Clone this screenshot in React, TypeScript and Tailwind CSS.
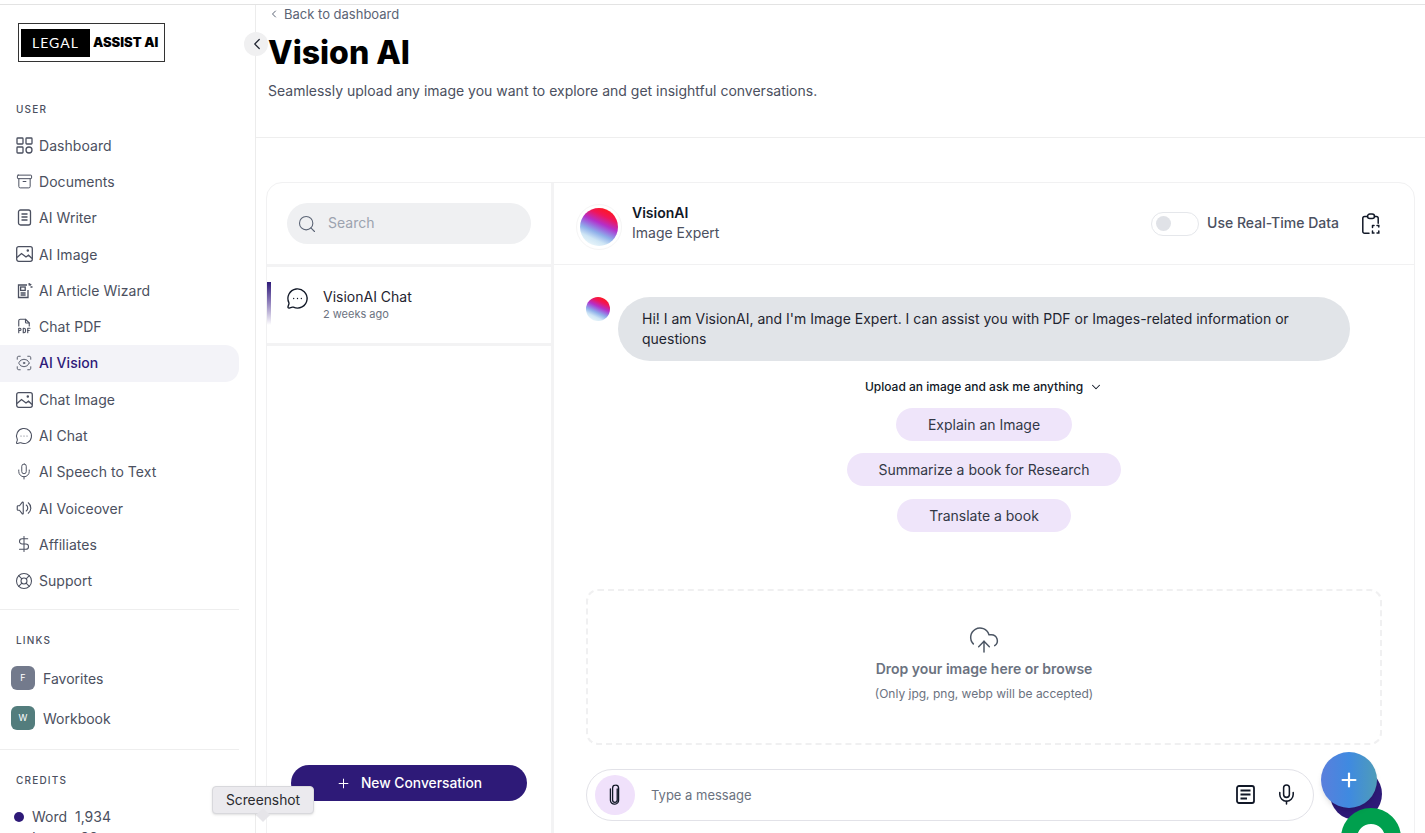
import type { ReactNode } from 'react';
import {
  Archive,
  ChevronDown,
  ChevronLeft,
  CloudUpload,
  DollarSign,
  LifeBuoy,
  MessageCircleMore,
  Mic,
  Plus,
  ScanEye,
  Search,
} from 'lucide-react';
import { TbFileTypePdf, TbVolume } from 'react-icons/tb';

const FONT = "font-['Inter','Noto_Sans',sans-serif]";
const AVATAR =
  'bg-[linear-gradient(205deg,#ff1818_10%,#f0155a_26%,#b52fc8_42%,#9a6fe0_52%,#8fb0ea_62%,#cfe6f5_76%,#eef8fb_92%)]';

function DashboardIcon() {
  return (
    <svg width="17" height="17" viewBox="0 0 17 17" fill="none" stroke="currentColor" strokeWidth="1.3">
      <rect x="1" y="1" width="6" height="6" rx="0.8" />
      <rect x="10" y="1" width="6" height="6" rx="0.8" />
      <rect x="1" y="10" width="6" height="6" rx="0.8" />
      <circle cx="13" cy="13" r="3" />
    </svg>
  );
}

function WriterIcon() {
  return (
    <svg width="17" height="17" viewBox="0 0 17 17" fill="none" stroke="currentColor" strokeWidth="1.3">
      <rect x="2.5" y="1" width="12" height="15" rx="2" />
      <path d="M5.5 5h6M5.5 8h6M5.5 11h6" />
    </svg>
  );
}

function ImageIcon() {
  return (
    <svg width="17" height="16" viewBox="0 0 17 16" fill="none" stroke="currentColor" strokeWidth="1.3">
      <rect x="0.7" y="0.7" width="15.6" height="14.6" rx="2" />
      <path d="M1 11.5 L5.5 7.5 L10 11 L12.5 9.2 L16 12.5" />
      <circle cx="11.8" cy="4.6" r="0.6" fill="currentColor" />
    </svg>
  );
}

function WizardIcon() {
  return (
    <svg width="17" height="17" viewBox="0 0 17 17" fill="none" stroke="currentColor" strokeWidth="1.3">
      <path d="M11 3H2.5v12.5H12V8" />
      <rect x="4.6" y="5" width="4.6" height="3.4" />
      <path d="M4.6 11h5M4.6 13h5M13.2 1v2.4M14.5 5h2M13.6 3.6l1.6-1.6" />
    </svg>
  );
}

function ClipboardScanIcon() {
  return (
    <svg width="20" height="22" viewBox="0 0 20 22" fill="none" stroke="#111827" strokeWidth="1.5" strokeLinecap="round">
      <path d="M6.5 3.5H3.6A1.8 1.8 0 0 0 1.8 5.3v13.2a1.8 1.8 0 0 0 1.8 1.8H8" />
      <path d="M13.5 3.5h1.9a1.8 1.8 0 0 1 1.8 1.8v5" />
      <rect x="6.5" y="1" width="7" height="4.6" rx="2.3" />
      <path d="M11.5 12.5h1.5M16 12.5h1.8v1.5M17.8 18v2h-1.8M13 20h-1.5v-2M11.5 14.5v-2" />
    </svg>
  );
}

function ClipIcon() {
  return (
    <svg width="12" height="22" viewBox="0 0 12 22" fill="none" stroke="#111827" strokeWidth="1.3" strokeLinecap="round">
      <path d="M8.2 5v11a2.3 2.3 0 0 1-4.6 0V4a2.9 2.9 0 0 1 2.9-2.8A3 3 0 0 1 9.6 4v12.2a3.8 3.8 0 0 1-3.6 3.9 4 4 0 0 1-4.6-3.9V5" />
    </svg>
  );
}

function NotesIcon() {
  return (
    <svg width="19" height="19" viewBox="0 0 19 19" fill="none" stroke="#111827" strokeWidth="1.8">
      <rect x="1" y="1" width="17" height="17" rx="2" />
      <path d="M4.5 5.5h10M4.5 9.5h10M4.5 13.5h6.5" />
    </svg>
  );
}

function NavItem({ icon, label, active }: { icon: ReactNode; label: string; active?: boolean }) {
  return (
    <a
      className={
        active
          ? 'flex h-[37px] items-center gap-[6px] rounded-r-[14px] bg-[#f3f3f8] pb-[1px] pl-[15px] text-[14px] font-medium tracking-[0.05px] text-[#2e1a78]'
          : 'flex h-[36.2px] items-center gap-[6px] pl-[15px] text-[14px] tracking-[0.05px] text-[#4b5060]'
      }
    >
      <span className={active ? 'flex w-[18px] justify-center text-[#565b6b]' : 'flex w-[18px] justify-center text-[#4b5060]'}>
        {icon}
      </span>
      {label}
    </a>
  );
}

function Sidebar() {
  return (
    <aside className="flex h-full w-[256px] shrink-0 flex-col border-r border-[#ececec]">
      <div className="pl-[18px] pt-[18px]">
        <div className="flex h-[39px] w-[147px] items-center border border-[#333] bg-white pl-[2px]">
          <span className="flex h-[28px] w-[69px] items-center justify-center bg-black text-[14px] tracking-[1px] text-white font-['Lato',sans-serif]">
            LEGAL
          </span>
          <span className="ml-[3px] whitespace-nowrap text-[13px] font-black text-black">ASSIST AI</span>
        </div>
      </div>
      <div className="pl-[16px] pt-[40px] text-[10px] font-medium leading-[14px] tracking-[1.2px] text-[#4b5060]">USER</div>
      <nav className="mr-[16px] mt-[11.4px] flex flex-col">
        <NavItem icon={<DashboardIcon />} label="Dashboard" />
        <NavItem icon={<Archive size={17} strokeWidth={1.4} />} label="Documents" />
        <NavItem icon={<WriterIcon />} label="AI Writer" />
        <NavItem icon={<ImageIcon />} label="AI Image" />
        <NavItem icon={<WizardIcon />} label="AI Article Wizard" />
        <NavItem icon={<TbFileTypePdf size={18} strokeWidth={1.5} />} label="Chat PDF" />
        <NavItem icon={<ScanEye size={18} strokeWidth={1.3} />} label="AI Vision" active />
        <NavItem icon={<ImageIcon />} label="Chat Image" />
        <NavItem icon={<MessageCircleMore size={18} strokeWidth={1.4} />} label="AI Chat" />
        <NavItem icon={<Mic size={19} strokeWidth={1.3} />} label="AI Speech to Text" />
        <NavItem icon={<TbVolume size={18} strokeWidth={1.5} />} label="AI Voiceover" />
        <NavItem icon={<DollarSign size={18} strokeWidth={1.4} />} label="Affiliates" />
        <NavItem icon={<LifeBuoy size={18} strokeWidth={1.4} />} label="Support" />
      </nav>
      <div className="mr-[16px] mt-[10.6px] border-t border-[#eeeeee]" />
      <div className="pl-[16px] pt-[23px] text-[10px] font-medium leading-[14px] tracking-[1.2px] text-[#4b5060]">LINKS</div>
      <div className="mt-[19px] flex items-center gap-[8px] pl-[11px] text-[14px] text-[#4b5060]">
        <span className="flex h-[24px] w-[24px] items-center justify-center rounded-[6px] bg-[#737a8c] text-[9px] text-white">F</span>
        Favorites
      </div>
      <div className="mt-[16px] flex items-center gap-[8px] pl-[11px] text-[14px] text-[#4b5060]">
        <span className="flex h-[24px] w-[24px] items-center justify-center rounded-[6px] bg-[#537d7d] text-[9px] text-white">W</span>
        Workbook
      </div>
      <div className="mr-[16px] mt-[19px] border-t border-[#eeeeee]" />
      <div className="pl-[16px] pt-[23px] text-[10px] font-medium leading-[14px] tracking-[1.2px] text-[#4b5060]">CREDITS</div>
      <div className="mt-[20px] flex items-center gap-[8px] pl-[14px] text-[14px] leading-[20px] text-[#4b5060]">
        <span className="h-[10px] w-[10px] rounded-full bg-[#2e1a78]" />
        <span>Word&nbsp;&nbsp;1,934</span>
      </div>
      <div className="mt-[1px] flex items-center gap-[8px] pl-[14px] text-[14px] leading-[20px] text-[#4b5060]">
        <span className="h-[10px] w-[10px] rounded-full bg-[#a89ef0]" />
        <span>Image&nbsp;&nbsp;98</span>
      </div>
    </aside>
  );
}

function ConversationList() {
  return (
    <div className="flex h-full w-[287px] shrink-0 flex-col border-r-[3px] border-[#f3f3f4]">
      <div className="flex h-[84px] items-start border-b-[3px] border-[#f3f3f4] px-[20px] pt-[20px]">
        <div className="flex h-[41px] w-[244px] items-center gap-[11px] rounded-full bg-[#eff0f2] pl-[10px] text-[14px] leading-[20px] text-[#9ca3af]">
          <Search size={20} strokeWidth={1.3} className="text-[#5b6475]" />
          <span className="-mt-[2px]">Search</span>
        </div>
      </div>
      <div className="flex h-[79px] items-center gap-[14px] border-b-[3px] border-[#f3f3f4] pl-[19px]">
        <span className="-mt-[14px]">
          <MessageCircleMore size={23} strokeWidth={1.4} className="text-[#111827]" />
        </span>
        <div className="-mt-[3px]">
          <div className="text-[14px] leading-[20px] text-[#1f2430]">VisionAI Chat</div>
          <div className="text-[11px] leading-[14px] text-[#6b7280]">2 weeks ago</div>
        </div>
      </div>
      <div className="flex flex-1 items-start justify-center pt-[419px]">
        <button className="flex h-[36px] w-[236px] items-center justify-center gap-[10px] rounded-full bg-[#2e1a78] text-[13.8px] font-medium text-white">
          <Plus size={15} strokeWidth={1.6} />
          New Conversation
        </button>
      </div>
    </div>
  );
}

function Suggestion({ label, width }: { label: string; width: string }) {
  return (
    <button className={`flex h-[33px] items-center justify-center rounded-full bg-[#efe5fa] text-[14px] text-[#333846] ${width}`}>
      {label}
    </button>
  );
}

function ChatPanel() {
  return (
    <div className="flex min-w-0 flex-1 flex-col">
      <div className="flex h-[82px] shrink-0 items-center border-b border-[#f1f1f2] pl-[22px] pr-[33px]">
        <div className="mt-[6px] flex h-[46px] w-[46px] items-center justify-center rounded-full border border-[#f5f5f5] bg-white">
          <div className={`h-[38px] w-[38px] rounded-full ${AVATAR}`} />
        </div>
        <div className="-mt-[2px] ml-[10px]">
          <div className="text-[14px] font-semibold leading-[20px] text-[#111827]">VisionAI</div>
          <div className="text-[14px] leading-[20px] text-[#4b5060]">Image Expert</div>
        </div>
        <div className="ml-auto flex h-[24px] w-[48px] items-center rounded-full border border-[#e5e7eb] pl-[4px]">
          <span className="h-[15px] w-[15px] rounded-full bg-[#e0e2e7]" />
        </div>
        <span className="-mt-[2px] ml-[8px] text-[14px] font-medium text-[#4b5060]">Use Real-Time Data</span>
        <span className="ml-[22px]">
          <ClipboardScanIcon />
        </span>
      </div>
      <div className="flex flex-1 flex-col px-[32px] pt-[32px]">
        <div className="flex items-start gap-[8px]">
          <div className={`h-[24px] w-[24px] shrink-0 rounded-full ${AVATAR}`} />
          <div className="h-[64px] w-[732px] rounded-[32px] bg-[#e1e4e8] px-[24px] py-[12px] text-[14px] leading-[20px] text-[#1f2430]">
            Hi! I am VisionAI, and I'm Image Expert. I can assist you with PDF or Images-related information or questions
          </div>
        </div>
        <div className="mt-[18px] flex items-center justify-center gap-[6px] text-[12px] font-medium leading-[16px] text-[#111827]">
          Upload an image and ask me anything
          <ChevronDown size={14} strokeWidth={1.8} />
        </div>
        <div className="mt-[13px] flex flex-col items-center gap-[12.4px]">
          <Suggestion label="Explain an Image" width="w-[176px]" />
          <Suggestion label="Summarize a book for Research" width="w-[274px]" />
          <Suggestion label="Translate a book" width="w-[174px]" />
        </div>
        <div className="mt-[57px] flex h-[156px] shrink-0 flex-col items-center rounded-[12px] border-2 border-dashed border-[#f0f0f1] pt-[33px]">
          <CloudUpload size={32} strokeWidth={1.1} className="text-[#4b5563]" />
          <div className="mt-[3px] text-[14px] font-semibold leading-[20px] text-[#6b7280]">Drop your image here or browse</div>
          <div className="mt-[7px] text-[12px] leading-[16px] text-[#6b7280]">(Only jpg, png, webp will be accepted)</div>
        </div>
        <div className="mt-[24px] flex h-[52px] w-[728px] shrink-0 items-center rounded-full border border-[#e2e2e8] pl-[8px] pr-[15px]">
          <span className="flex h-[40px] w-[40px] items-center justify-center rounded-full bg-[#f0e1fb]">
            <ClipIcon />
          </span>
          <span className="ml-[16px] mt-[2px] flex-1 text-[13px] text-[#6b7280]">Type a message</span>
          <NotesIcon />
          <Mic size={23} strokeWidth={1.6} className="ml-[20px] text-[#111827]" />
        </div>
      </div>
    </div>
  );
}

export default function App() {
  return (
    <div className={`relative h-[833px] overflow-hidden bg-white pt-[4px] ${FONT}`}>
      <div className="flex h-full border-t border-[#e3e3e3]">
        <Sidebar />
        <main className="flex min-w-0 flex-1 flex-col">
          <header className="h-[133px] shrink-0 border-b border-[#eeeeee] pl-[12px]">
            <div className="flex items-center gap-[4px] text-[13px] leading-[18px] text-[#5b6475]">
              <ChevronLeft size={12} strokeWidth={2} />
              Back to dashboard
            </div>
            <h1 className="mt-[11px] text-[32px] font-extrabold leading-[38px] text-black">Vision AI</h1>
            <p className="mt-[9px] text-[14px] leading-[20px] text-[#4b5060]">
              Seamlessly upload any image you want to explore and get insightful conversations.
            </p>
          </header>
          <div className="min-h-0 flex-1 pl-[10px] pr-[10px] pt-[44px]">
            <div className="flex h-[670px] rounded-t-[16px] border border-[#f1f1f2]">
              <ConversationList />
              <ChatPanel />
            </div>
          </div>
        </main>
      </div>

      {/* sidebar collapse button */}
      <button className="absolute left-[244px] top-[32px] flex h-[24px] w-[24px] items-center justify-center rounded-full bg-[#f0f0f1] text-[#1f2430]">
        <ChevronLeft size={18} strokeWidth={1.6} className="ml-[1px]" />
      </button>

      {/* active conversation marker */}
      <div className="absolute left-[267px] top-[282px] h-[43px] w-[4px] bg-[linear-gradient(180deg,#2e1a78,#8a7ab8_45%,#ffffff)]" />

      {/* browser tooltip */}
      <div className="absolute left-[212px] top-[786px] flex h-[28px] w-[102px] items-center justify-center rounded-[4px] border border-[#d8d8dc] bg-[#ebeaee] text-[13.8px] text-[#2a2a2e] shadow-sm">
        Screenshot
      </div>
      <div className="absolute left-[258px] top-[810px] h-[10px] w-[10px] rotate-45 bg-[#e6e5e9]" />

      {/* floating widgets */}
      <div className="absolute left-[1330px] top-[768px] h-[52px] w-[52px] rounded-full bg-[#2e1a78]" />
      <div className="absolute left-[1341px] top-[808px] h-[60px] w-[60px] rounded-full border-[16px] border-[#00a04e] bg-white" />
      <button className="absolute left-[1321px] top-[752px] flex h-[56px] w-[56px] items-center justify-center rounded-full bg-[linear-gradient(90deg,#5a7fdc,#3f8ae0_50%,#4f9cb8)] text-white shadow-md">
        <Plus size={22} strokeWidth={2.4} />
      </button>
    </div>
  );
}
